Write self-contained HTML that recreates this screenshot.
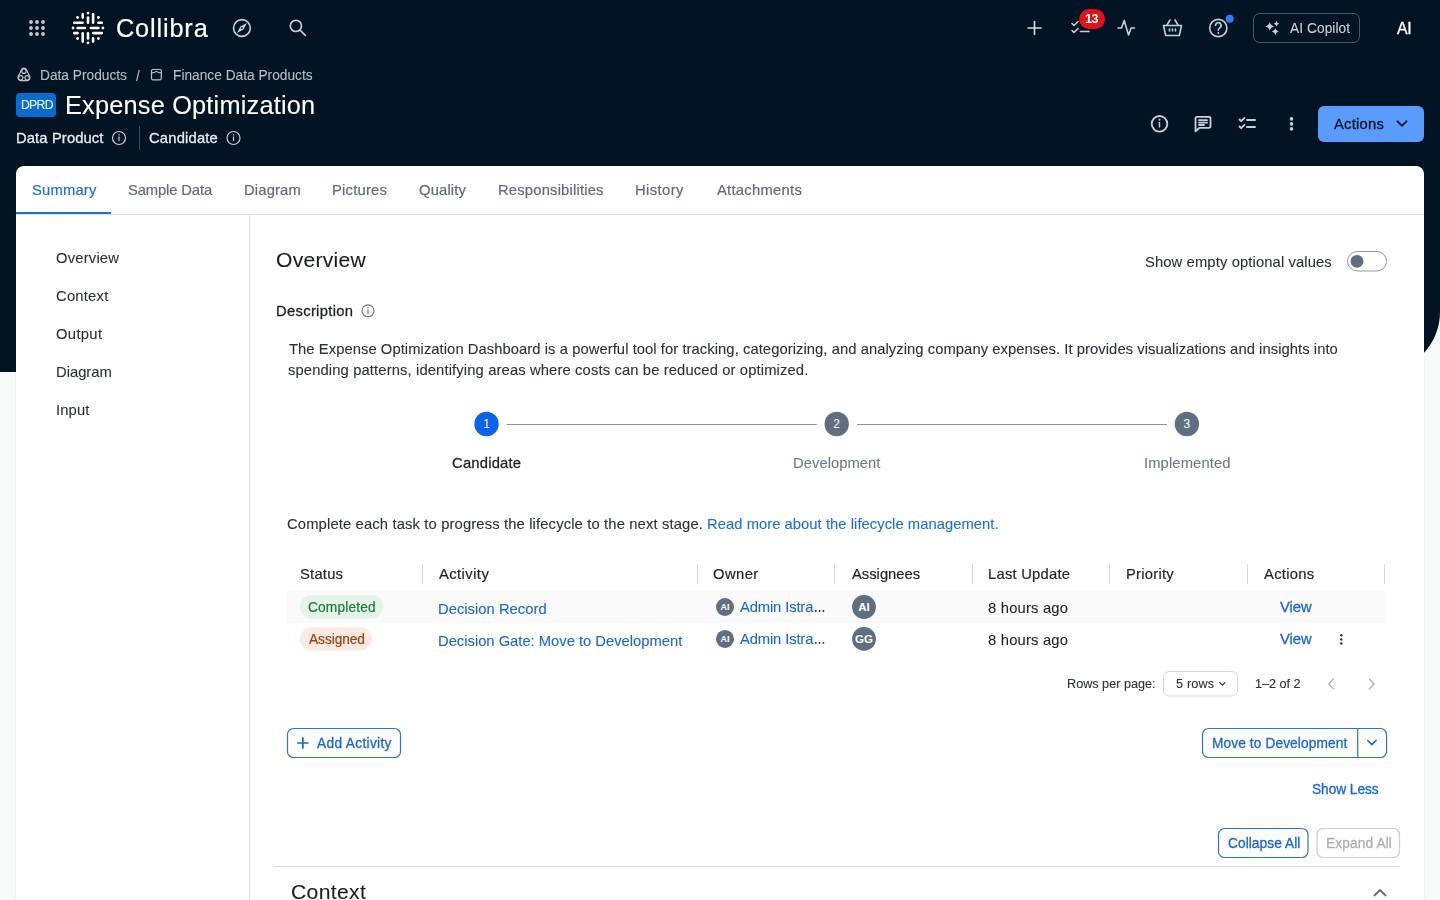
<!DOCTYPE html>
<html><head><meta charset="utf-8">
<style>
*{box-sizing:border-box;margin:0;padding:0}
html,body{width:1440px;height:900px;overflow:hidden}
body{background:#f8f9f9;font-family:"Liberation Sans",sans-serif;position:relative;color:#1f2933}
.abs{position:absolute}
.hdr{position:absolute;left:0;top:0;width:1440px;height:372px;background:#021423;border-bottom-right-radius:60px}
.t{position:absolute;white-space:nowrap;line-height:1;will-change:transform}
svg{position:absolute;overflow:visible}
.card{position:absolute;left:16px;top:166px;width:1408px;height:760px;background:#fff;border-radius:8px 8px 0 0;box-shadow:0 0 2px rgba(0,0,0,.12)}
</style></head><body>
<div class="hdr"></div>

<!-- top nav -->
<svg style="left:0;top:0" width="1440" height="60">
  <!-- apps grid -->
  <g fill="#c0c9d2">
    <circle cx="31" cy="22" r="1.9"/><circle cx="37" cy="22" r="1.9"/><circle cx="43" cy="22" r="1.9"/>
    <circle cx="31" cy="28" r="1.9"/><circle cx="37" cy="28" r="1.9"/><circle cx="43" cy="28" r="1.9"/>
    <circle cx="31" cy="34" r="1.9"/><circle cx="37" cy="34" r="1.9"/><circle cx="43" cy="34" r="1.9"/>
  </g>
  <!-- collibra logo -->
  <g stroke="#fff" stroke-width="2.6" stroke-linecap="round" fill="none">
    <line x1="82.7" y1="14.3" x2="82.7" y2="17.6"/>
    <line x1="88" y1="17.6" x2="88" y2="22.7"/>
    <line x1="93.1" y1="14.3" x2="93.1" y2="22.7"/>
    <line x1="82.7" y1="33.2" x2="82.7" y2="41.6"/>
    <line x1="88" y1="33.3" x2="88" y2="38.5"/>
    <line x1="93.1" y1="38.4" x2="93.1" y2="41.6"/>
    <line x1="74.3" y1="22.7" x2="82.6" y2="22.7"/>
    <line x1="98.4" y1="22.7" x2="101.8" y2="22.7"/>
    <line x1="77.6" y1="28" x2="85" y2="28"/>
    <line x1="90.8" y1="28" x2="98.4" y2="28"/>
    <line x1="74.3" y1="33.1" x2="77.6" y2="33.1"/>
    <line x1="93.2" y1="33.1" x2="101.8" y2="33.1"/>
  </g>
  <g fill="#fff">
    <circle cx="88" cy="13.1" r="1.4"/><circle cx="88" cy="42.8" r="1.4"/>
    <circle cx="73.1" cy="28" r="1.4"/><circle cx="102.9" cy="28" r="1.4"/>
    <circle cx="77.6" cy="17.5" r="1.4"/><circle cx="98.4" cy="17.5" r="1.4"/>
    <circle cx="77.6" cy="38.5" r="1.4"/><circle cx="98.4" cy="38.5" r="1.4"/>
  </g>
  <!-- compass -->
  <g stroke="#c5ced6" stroke-width="1.6" fill="none">
    <circle cx="241.9" cy="28" r="8.4"/>
  </g>
  <path d="M247 23 L243.5 29.6 L240.3 26.4 Z M237 33 L240.3 26.4 L243.5 29.6 Z" fill="#c5ced6"/>
  <circle cx="241.9" cy="28" r="0.9" fill="#021423"/>
  <!-- search -->
  <g stroke="#c5ced6" stroke-width="1.7" fill="none" stroke-linecap="round">
    <circle cx="295.9" cy="25.9" r="5.6"/>
    <line x1="300" y1="30" x2="305.3" y2="35.3"/>
  </g>
  <!-- plus -->
  <g stroke="#d5dce2" stroke-width="1.6" stroke-linecap="round">
    <line x1="1028" y1="28" x2="1041" y2="28"/><line x1="1034.5" y1="21.5" x2="1034.5" y2="34.5"/>
  </g>
  <!-- checklist -->
  <g stroke="#c5ced6" stroke-width="1.6" fill="none" stroke-linecap="round" stroke-linejoin="round">
    <path d="M1072 23.5 l2 2 l4 -4"/>
    <path d="M1072 30.5 l2 2 l4 -4"/>
    <line x1="1080.5" y1="31.5" x2="1089" y2="31.5"/>
  </g>
  <rect x="1079" y="9" width="26" height="20" rx="10" fill="#e0121a"/>
  
  <!-- activity -->
  <path d="M1118 28 h3.5 l2.7 -7.5 l4.3 14.5 l2.6 -7 h3.3" stroke="#c5ced6" stroke-width="1.6" fill="none" stroke-linejoin="round" stroke-linecap="round"/>
  <!-- basket -->
  <g stroke="#c5ced6" stroke-width="1.6" fill="none" stroke-linejoin="round" stroke-linecap="round">
    <path d="M1163.5 25.5 h18 l-2.2 10 h-13.6 z"/>
    <path d="M1167 25 l3 -5 M1178 25 l-3 -5"/>
    <line x1="1169.5" y1="29" x2="1169.5" y2="31"/><line x1="1172.5" y1="29" x2="1172.5" y2="31"/><line x1="1175.5" y1="29" x2="1175.5" y2="31"/>
  </g>
  <!-- help -->
  <circle cx="1218.3" cy="28" r="8.6" stroke="#c5ced6" stroke-width="1.6" fill="none"/>
  <path d="M1215.5 25.5 a2.8 2.8 0 1 1 4.2 2.4 c-1 .6 -1.4 1.1 -1.4 2.3" stroke="#c5ced6" stroke-width="1.6" fill="none" stroke-linecap="round"/>
  <circle cx="1218.3" cy="33" r="1" fill="#c5ced6"/>
  <circle cx="1229.7" cy="18.7" r="4" fill="#2f7cf6"/>
  <!-- copilot -->
  <rect x="1253.5" y="13.5" width="106" height="29" rx="6" stroke="#4b5866" stroke-width="1" fill="none"/>
  <path fill="#c5ced6" d="M1269.7 22.099999999999998 Q1270.474 25.625999999999998 1274.0 26.4 Q1270.474 27.174 1269.7 30.7 Q1268.9260000000002 27.174 1265.4 26.4 Q1268.9260000000002 25.625999999999998 1269.7 22.099999999999998Z M1276.5 21.0 Q1276.986 23.214 1279.2 23.7 Q1276.986 24.186 1276.5 26.4 Q1276.014 24.186 1273.8 23.7 Q1276.014 23.214 1276.5 21.0Z M1275.3 28.200000000000003 Q1275.912 30.988000000000003 1278.7 31.6 Q1275.912 32.212 1275.3 35.0 Q1274.6879999999999 32.212 1271.8999999999999 31.6 Q1274.6879999999999 30.988000000000003 1275.3 28.200000000000003Z"/>
</svg>

<!-- breadcrumb -->
<svg style="left:0;top:0" width="400" height="90">
  <g stroke="#b9c3cd" stroke-width="1.2" fill="none" stroke-linejoin="round">
    <path d="M21.3 69.9 A2.9 2.9 0 0 1 26.6 69.9 L29.7 76.7 A2.9 2.9 0 0 1 27.3 80.6 L20.6 80.6 A2.9 2.9 0 0 1 18.2 76.7 Z"/>
    <circle cx="23.95" cy="71.2" r="2.2"/><circle cx="20.7" cy="77.8" r="2.2"/><circle cx="27.2" cy="77.8" r="2.2"/>
    <rect x="151.5" y="69.5" width="9.8" height="10.3" rx="1.2"/>
    <path d="M151.5 72.9 Q153.6 72.9 154.6 72.2 Q156.4 70.8 158.2 72.2 Q159.2 72.9 161.3 72.9"/>
  </g>
</svg>

<!-- title -->
<div class="abs" style="left:16px;top:93px;width:40px;height:24px;background:#0b6bcf;border-radius:4px"></div>

<div class="abs" style="left:139px;top:126px;width:1px;height:24px;background:#3b4856"></div>
<svg style="left:0;top:0" width="300" height="160">
  <g stroke="#c5ced6" stroke-width="1.2" fill="none"><circle cx="119" cy="138" r="6.5"/><circle cx="233.5" cy="138" r="6.5"/></g>
  <g fill="#c5ced6"><rect x="118.4" y="136.5" width="1.2" height="4.5"/><circle cx="119" cy="134.8" r=".8"/><rect x="232.9" y="136.5" width="1.2" height="4.5"/><circle cx="233.5" cy="134.8" r=".8"/></g>
</svg>

<!-- right header icons -->
<svg style="left:1100px;top:100px" width="340" height="50">
  <g stroke="#c8d1da" stroke-width="1.8" fill="none" stroke-linecap="round" stroke-linejoin="round">
    <circle cx="59.5" cy="23.8" r="7.8"/>
    <path d="M97 16.8 h12 a1.5 1.5 0 0 1 1.5 1.5 v8 a1.5 1.5 0 0 1 -1.5 1.5 h-9.5 l-4 3.5 v-13 a1.5 1.5 0 0 1 1.5 -1.5 z"/>
    <line x1="99" y1="20.2" x2="107" y2="20.2"/><line x1="99" y1="22.6" x2="107" y2="22.6"/><line x1="99" y1="25" x2="104" y2="25"/>
    <path d="M139.5 19.5 l1.7 1.7 l3.3 -3.3"/><path d="M139.5 26.5 l1.7 1.7 l3.3 -3.3"/>
    <line x1="147" y1="20" x2="155" y2="20"/><line x1="147" y1="27" x2="155" y2="27"/>
  </g>
  <g fill="#c5ced6"><rect x="58.8" y="22" width="1.4" height="5.5"/><circle cx="59.5" cy="19.8" r="1"/>
    <circle cx="191.5" cy="18.9" r="1.8"/><circle cx="191.5" cy="23.9" r="1.8"/><circle cx="191.5" cy="28.9" r="1.8"/></g>
</svg>
<div class="abs" style="left:1318px;top:106px;width:106px;height:36px;background:#5a9cfc;border-radius:6px"></div>
<svg style="left:1390px;top:110px" width="30" height="30"><path d="M7.5 11.3 l4.5 4.5 l4.5 -4.5" stroke="#0a1a2a" stroke-width="1.8" fill="none" stroke-linecap="round" stroke-linejoin="round"/></svg>

<div class="card"></div>
<!-- tabs -->
<div class="abs" style="left:16px;top:214px;width:1408px;height:1px;background:#dde1e6"></div>
<div class="abs" style="left:16px;top:212px;width:95px;height:2px;background:#1f6fd9"></div>
<div class="abs" style="left:249px;top:215px;width:1px;height:685px;background:#dde1e6"></div>

<svg style="left:0;top:0" width="1440" height="900">
  <!-- toggle -->
  <rect x="1347.5" y="251.5" width="39" height="19.5" rx="9.75" fill="#fff" stroke="#8a98a6" stroke-width="1"/>
  <circle cx="1357" cy="261.3" r="6.4" fill="#5f6f80"/>
  <!-- desc info -->
  <circle cx="368" cy="310.8" r="6" fill="none" stroke="#6a7f95" stroke-width="1.2"/>
  <rect x="367.4" y="309.3" width="1.2" height="4.5" fill="#6a7f95"/><circle cx="368" cy="307.6" r=".8" fill="#6a7f95"/>
  <!-- stepper -->
  <line x1="506.5" y1="424.5" x2="816.7" y2="424.5" stroke="#8795a3" stroke-width="1"/>
  <line x1="857" y1="424.5" x2="1167" y2="424.5" stroke="#8795a3" stroke-width="1"/>
  <circle cx="486.5" cy="424" r="12.2" fill="#0a63e8"/>
  <circle cx="836.7" cy="424" r="12.2" fill="#5f6f80"/>
  <circle cx="1186.9" cy="424" r="12.2" fill="#5f6f80"/>
  <g font-family="Liberation Sans" font-size="12" fill="#fff" text-anchor="middle">
    <text x="486.5" y="428.4">1</text><text x="836.7" y="428.4">2</text><text x="1186.9" y="428.4">3</text>
  </g>
  <!-- table header dividers -->
  <g stroke="#d5dae0" stroke-width="1">
    <line x1="422.5" y1="564" x2="422.5" y2="584"/><line x1="697.5" y1="564" x2="697.5" y2="584"/>
    <line x1="834.5" y1="564" x2="834.5" y2="584"/><line x1="972.5" y1="564" x2="972.5" y2="584"/>
    <line x1="1109.5" y1="564" x2="1109.5" y2="584"/><line x1="1247.5" y1="564" x2="1247.5" y2="584"/>
    <line x1="1384.5" y1="564" x2="1384.5" y2="584"/>
  </g>
  <rect x="287" y="591" width="1100" height="32" fill="#fafafa"/>
  <!-- pills -->
  <rect x="300" y="595" width="83.3" height="23.7" rx="11.85" fill="#e4f4e9"/>
  <rect x="300" y="627.2" width="72" height="23.5" rx="11.75" fill="#fdeae2"/>
  <!-- owner avatars -->
  <circle cx="725" cy="607" r="9" fill="#5f6f80"/>
  <circle cx="725" cy="638.9" r="9" fill="#5f6f80"/>
  <g font-family="Liberation Sans" font-size="9" font-weight="bold" fill="#fff" text-anchor="middle">
    <text x="725" y="610.2">AI</text><text x="725" y="642.1">AI</text>
  </g>
  <!-- ellipsis -->
  <g fill="#1f2328"><circle cx="815.8" cy="611" r=".9"/><circle cx="819.6" cy="611" r=".9"/><circle cx="823.4" cy="611" r=".9"/>
  <circle cx="815.8" cy="642.9" r=".9"/><circle cx="819.6" cy="642.9" r=".9"/><circle cx="823.4" cy="642.9" r=".9"/></g>
  <!-- assignee avatars -->
  <circle cx="864" cy="607" r="11.9" fill="#5f6f80"/>
  <circle cx="864" cy="638.9" r="11.9" fill="#5f6f80"/>
  <g font-family="Liberation Sans" font-size="11.5" font-weight="bold" fill="#fff" text-anchor="middle">
    <text x="864" y="611.1">AI</text><text x="864" y="643">GG</text>
  </g>
  <!-- kebab row2 -->
  <g fill="#2b3138"><circle cx="1341.3" cy="635.3" r="1.2"/><circle cx="1341.3" cy="639.4" r="1.2"/><circle cx="1341.3" cy="643.5" r="1.2"/></g>
  <!-- pagination -->
  <rect x="1163.5" y="671.5" width="74" height="24.5" rx="6" fill="#fff" stroke="#d3d8de" stroke-width="1"/>
  <path d="M1219.8 682.6 l2.6 2.6 l2.6 -2.6" stroke="#2b3138" stroke-width="1.2" fill="none" stroke-linecap="round" stroke-linejoin="round"/>
  <path d="M1333.5 679 l-4.8 4.9 l4.8 4.9" stroke="#a9b3bd" stroke-width="1.4" fill="none" stroke-linecap="round" stroke-linejoin="round"/>
  <path d="M1369.3 679 l4.8 4.9 l-4.8 4.9" stroke="#a9b3bd" stroke-width="1.4" fill="none" stroke-linecap="round" stroke-linejoin="round"/>
  <!-- buttons -->
  <rect x="287.5" y="728.5" width="113" height="29" rx="6" fill="#fff" stroke="#2b74dc" stroke-width="1.2"/>
  <g stroke="#1a66d6" stroke-width="1.7" stroke-linecap="round"><line x1="297.8" y1="743" x2="307.9" y2="743"/><line x1="302.85" y1="737.9" x2="302.85" y2="748.1"/></g>
  <rect x="1202.5" y="728.5" width="184" height="29" rx="6" fill="#fff" stroke="#2b74dc" stroke-width="1.2"/>
  <line x1="1357.7" y1="728.5" x2="1357.7" y2="757.5" stroke="#2b74dc" stroke-width="1.2"/>
  <path d="M1367.8 740.5 l4.1 4.1 l4.1 -4.1" stroke="#1a66d6" stroke-width="1.7" fill="none" stroke-linecap="round" stroke-linejoin="round"/>
  <rect x="1218.5" y="828.5" width="89.5" height="29" rx="6" fill="#fff" stroke="#2b74dc" stroke-width="1.2"/>
  <rect x="1317" y="828.5" width="82.5" height="29" rx="6" fill="#fff" stroke="#c9ced4" stroke-width="1.2"/>
  <line x1="274" y1="866.5" x2="1400" y2="866.5" stroke="#d5dae0" stroke-width="1"/>
  <path d="M1374.5 895.5 l5.5 -5.5 l5.5 5.5" stroke="#5f6f80" stroke-width="1.8" fill="none" stroke-linecap="round" stroke-linejoin="round"/>
</svg>
<div class="t" style="left:115.5px;top:16.0px;font-size:25.32px;letter-spacing:0.843px;color:#ffffff;-webkit-text-stroke-width:0.2px;">Collibra</div>
<div class="t" style="left:136.4px;top:70.0px;font-size:13.71px;letter-spacing:0.0px;color:#b4bec8;-webkit-text-stroke-width:0.1px;">/</div>
<div class="t" style="left:40.4px;top:69.0px;font-size:13.71px;letter-spacing:0.008px;color:#b4bec8;-webkit-text-stroke-width:0.1px;">Data Products</div>
<div class="t" style="left:172.5px;top:69.0px;font-size:13.71px;letter-spacing:0.012px;color:#b4bec8;-webkit-text-stroke-width:0.1px;">Finance Data Products</div>
<div class="t" style="left:65.3px;top:93.0px;font-size:25.32px;letter-spacing:0.205px;color:#ffffff;-webkit-text-stroke-width:0.1px;">Expense Optimization</div>
<div class="t" style="left:20.6px;top:99.0px;font-size:12.13px;letter-spacing:-0.633px;color:#e6f2ff;-webkit-text-stroke-width:0.1px;">DPRD</div>
<div class="t" style="left:16.4px;top:131.0px;font-size:14.77px;letter-spacing:0.118px;color:#e8ecf0;-webkit-text-stroke-width:0.3px;">Data Product</div>
<div class="t" style="left:148.9px;top:131.0px;font-size:14.77px;letter-spacing:0.188px;color:#e8ecf0;-webkit-text-stroke-width:0.3px;">Candidate</div>
<div class="t" style="left:1289.7px;top:22.0px;font-size:13.71px;letter-spacing:0.078px;color:#c8d0d8;-webkit-text-stroke-width:0.1px;">AI Copilot</div>
<div class="t" style="left:1396.7px;top:21.0px;font-size:15.82px;letter-spacing:-0.2px;color:#ffffff;-webkit-text-stroke-width:0.3px;">AI</div>
<div class="t" style="left:1084.7px;top:13.0px;font-size:12.66px;letter-spacing:-0.6px;color:#ffffff;font-weight:bold;">13</div>
<div class="t" style="left:1333.8px;top:117.0px;font-size:14.77px;letter-spacing:0.233px;color:#031428;-webkit-text-stroke-width:0.3px;">Actions</div>
<div class="t" style="left:31.8px;top:183.0px;font-size:14.77px;letter-spacing:0.183px;color:#1f6fd9;-webkit-text-stroke-width:0.2px;">Summary</div>
<div class="t" style="left:127.7px;top:183.0px;font-size:14.77px;letter-spacing:-0.12px;color:#5d6c7d;-webkit-text-stroke-width:0.2px;">Sample Data</div>
<div class="t" style="left:244.0px;top:183.0px;font-size:14.77px;letter-spacing:0.167px;color:#5d6c7d;-webkit-text-stroke-width:0.2px;">Diagram</div>
<div class="t" style="left:332.4px;top:183.0px;font-size:14.77px;letter-spacing:0.229px;color:#5d6c7d;-webkit-text-stroke-width:0.2px;">Pictures</div>
<div class="t" style="left:418.7px;top:183.0px;font-size:14.77px;letter-spacing:0.167px;color:#5d6c7d;-webkit-text-stroke-width:0.2px;">Quality</div>
<div class="t" style="left:498.2px;top:183.0px;font-size:14.77px;letter-spacing:0.193px;color:#5d6c7d;-webkit-text-stroke-width:0.2px;">Responsibilities</div>
<div class="t" style="left:635.2px;top:183.0px;font-size:14.77px;letter-spacing:0.4px;color:#5d6c7d;-webkit-text-stroke-width:0.2px;">History</div>
<div class="t" style="left:716.6px;top:183.0px;font-size:14.77px;letter-spacing:0.27px;color:#5d6c7d;-webkit-text-stroke-width:0.2px;">Attachments</div>
<div class="t" style="left:56.1px;top:251.0px;font-size:14.77px;letter-spacing:0.2px;color:#2b3138;-webkit-text-stroke-width:0.1px;">Overview</div>
<div class="t" style="left:56.1px;top:289.0px;font-size:14.77px;letter-spacing:0.233px;color:#2b3138;-webkit-text-stroke-width:0.1px;">Context</div>
<div class="t" style="left:56.1px;top:327.0px;font-size:14.77px;letter-spacing:0.34px;color:#2b3138;-webkit-text-stroke-width:0.1px;">Output</div>
<div class="t" style="left:56.1px;top:365.0px;font-size:14.77px;letter-spacing:0.0px;color:#2b3138;-webkit-text-stroke-width:0.1px;">Diagram</div>
<div class="t" style="left:56.1px;top:403.0px;font-size:14.77px;letter-spacing:0.125px;color:#2b3138;-webkit-text-stroke-width:0.1px;">Input</div>
<div class="t" style="left:275.6px;top:249.0px;font-size:21.1px;letter-spacing:0.257px;color:#1b1f24;-webkit-text-stroke-width:0.1px;">Overview</div>
<div class="t" style="left:1145.4px;top:255.0px;font-size:14.77px;letter-spacing:0.116px;color:#2b3138;-webkit-text-stroke-width:0.1px;">Show empty optional values</div>
<div class="t" style="left:275.6px;top:304.0px;font-size:14.77px;letter-spacing:0.31px;color:#1f2328;-webkit-text-stroke-width:0.3px;">Description</div>
<div class="t" style="left:289.0px;top:342.0px;font-size:14.77px;letter-spacing:0.062px;color:#2b3138;-webkit-text-stroke-width:0.1px;">The Expense Optimization Dashboard is a powerful tool for tracking, categorizing, and analyzing company expenses. It provides visualizations and insights into</div>
<div class="t" style="left:288.0px;top:363.0px;font-size:14.77px;letter-spacing:0.128px;color:#2b3138;-webkit-text-stroke-width:0.1px;">spending patterns, identifying areas where costs can be reduced or optimized.</div>
<div class="t" style="left:452.1px;top:456.0px;font-size:14.77px;letter-spacing:0.213px;color:#1f2328;-webkit-text-stroke-width:0.3px;">Candidate</div>
<div class="t" style="left:793.4px;top:456.0px;font-size:14.77px;letter-spacing:0.04px;color:#6b7b8c;-webkit-text-stroke-width:0.1px;">Development</div>
<div class="t" style="left:1144.4px;top:456.0px;font-size:14.77px;letter-spacing:0.11px;color:#6b7b8c;-webkit-text-stroke-width:0.1px;">Implemented</div>
<div class="t" style="left:287.3px;top:517.0px;font-size:14.77px;letter-spacing:0.142px;color:#2b3138;-webkit-text-stroke-width:0.1px;">Complete each task to progress the lifecycle to the next stage.</div>
<div class="t" style="left:706.7px;top:517.0px;font-size:14.77px;letter-spacing:0.045px;color:#1f6fd9;-webkit-text-stroke-width:0.1px;">Read more about the lifecycle management.</div>
<div class="t" style="left:300.1px;top:567.0px;font-size:14.77px;letter-spacing:0.22px;color:#1f2328;-webkit-text-stroke-width:0.2px;">Status</div>
<div class="t" style="left:439.0px;top:567.0px;font-size:14.77px;letter-spacing:0.429px;color:#1f2328;-webkit-text-stroke-width:0.2px;">Activity</div>
<div class="t" style="left:712.9px;top:567.0px;font-size:14.77px;letter-spacing:0.438px;color:#1f2328;-webkit-text-stroke-width:0.2px;">Owner</div>
<div class="t" style="left:851.5px;top:567.0px;font-size:14.77px;letter-spacing:0.0px;color:#1f2328;-webkit-text-stroke-width:0.2px;">Assignees</div>
<div class="t" style="left:988.1px;top:567.0px;font-size:14.77px;letter-spacing:0.23px;color:#1f2328;-webkit-text-stroke-width:0.2px;">Last Update</div>
<div class="t" style="left:1125.5px;top:567.0px;font-size:14.77px;letter-spacing:0.25px;color:#1f2328;-webkit-text-stroke-width:0.2px;">Priority</div>
<div class="t" style="left:1263.9px;top:567.0px;font-size:14.77px;letter-spacing:0.292px;color:#1f2328;-webkit-text-stroke-width:0.2px;">Actions</div>
<div class="t" style="left:308.2px;top:601.0px;font-size:13.71px;letter-spacing:0.163px;color:#1e7b3c;-webkit-text-stroke-width:0.2px;">Completed</div>
<div class="t" style="left:309.0px;top:633.0px;font-size:13.71px;letter-spacing:-0.057px;color:#97420f;-webkit-text-stroke-width:0.2px;">Assigned</div>
<div class="t" style="left:438.0px;top:602.0px;font-size:14.77px;letter-spacing:0.021px;color:#1a66d6;-webkit-text-stroke-width:0.1px;">Decision Record</div>
<div class="t" style="left:438.0px;top:634.0px;font-size:14.77px;letter-spacing:-0.009px;color:#1a66d6;-webkit-text-stroke-width:0.1px;">Decision Gate: Move to Development</div>
<div class="t" style="left:740.1px;top:600.0px;font-size:14.77px;letter-spacing:-0.13px;color:#1a66d6;-webkit-text-stroke-width:0.1px;">Admin Istra</div>
<div class="t" style="left:987.9px;top:601.0px;font-size:14.77px;letter-spacing:0.2px;color:#1f2328;-webkit-text-stroke-width:0.1px;">8 hours ago</div>
<div class="t" style="left:1280.2px;top:600.0px;font-size:14.77px;letter-spacing:0.0px;color:#1a66d6;-webkit-text-stroke-width:0.3px;">View</div>
<div class="t" style="left:1067.3px;top:678.0px;font-size:12.66px;letter-spacing:-0.008px;color:#2b3138;-webkit-text-stroke-width:0.1px;">Rows per page:</div>
<div class="t" style="left:1175.9px;top:678.0px;font-size:12.66px;letter-spacing:0.16px;color:#2b3138;-webkit-text-stroke-width:0.1px;">5 rows</div>
<div class="t" style="left:1254.5px;top:678.0px;font-size:12.66px;letter-spacing:-0.043px;color:#2b3138;-webkit-text-stroke-width:0.1px;">1&ndash;2 of 2</div>
<div class="t" style="left:317.1px;top:737.0px;font-size:13.71px;letter-spacing:0.327px;color:#1a66d6;-webkit-text-stroke-width:0.3px;">Add Activity</div>
<div class="t" style="left:1212.3px;top:737.0px;font-size:13.71px;letter-spacing:0.106px;color:#1a66d6;-webkit-text-stroke-width:0.3px;">Move to Development</div>
<div class="t" style="left:1311.5px;top:783.0px;font-size:13.71px;letter-spacing:-0.05px;color:#1a66d6;-webkit-text-stroke-width:0.3px;">Show Less</div>
<div class="t" style="left:1228.2px;top:837.0px;font-size:13.71px;letter-spacing:0.064px;color:#1a66d6;-webkit-text-stroke-width:0.3px;">Collapse All</div>
<div class="t" style="left:1325.9px;top:837.0px;font-size:13.71px;letter-spacing:0.122px;color:#a9b0b8;-webkit-text-stroke-width:0.3px;">Expand All</div>
<div class="t" style="left:290.7px;top:881.0px;font-size:21.1px;letter-spacing:0.367px;color:#1b1f24;-webkit-text-stroke-width:0.1px;">Context</div>
<div class="t" style="left:740.1px;top:631.9px;font-size:14.77px;letter-spacing:-0.13px;color:#1a66d6;-webkit-text-stroke-width:0.1px;">Admin Istra</div>
<div class="t" style="left:987.9px;top:632.5px;font-size:14.77px;letter-spacing:0.2px;color:#1f2328;-webkit-text-stroke-width:0.1px;">8 hours ago</div>
<div class="t" style="left:1280.2px;top:631.75px;font-size:14.77px;letter-spacing:0.0px;color:#1a66d6;-webkit-text-stroke-width:0.3px;">View</div>

</body></html>
